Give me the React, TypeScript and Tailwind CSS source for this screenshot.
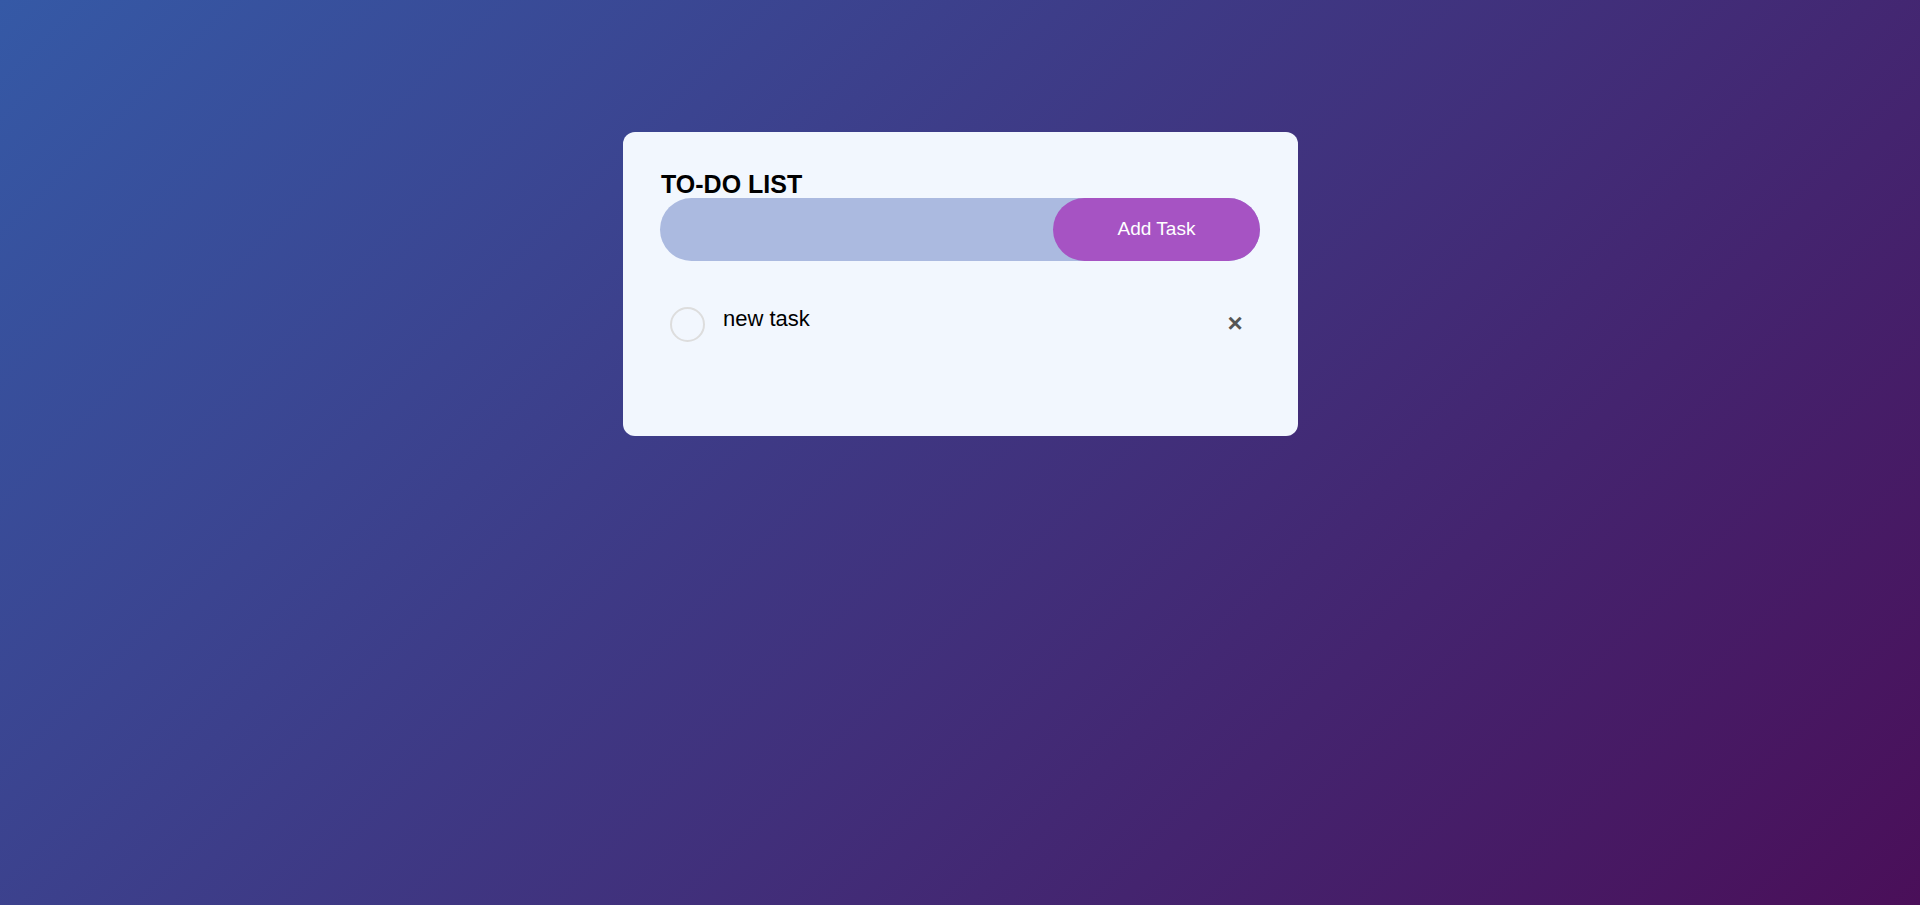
import React, { useState } from 'react';

type Task = { id: number; text: string; done: boolean };

function App() {
  const [tasks, setTasks] = useState<Task[]>([{ id: 1, text: 'new task', done: false }]);
  const [value, setValue] = useState('');

  const addTask = () => {
    if (!value.trim()) return;
    setTasks([...tasks, { id: Date.now(), text: value, done: false }]);
    setValue('');
  };

  return (
    <div
      className="min-h-screen w-full bg-[linear-gradient(135deg,#3559a6,#4a0f59)] pt-[132px]"
      style={{ fontFamily: '"Liberation Sans", Arial, sans-serif' }}
    >
      <div className="mx-auto w-[675px] rounded-[12px] bg-[#f2f7fe] px-[37.5px] pt-[37.5px] pb-[89px]">
        <h2 className="pl-[1px] text-[25px] font-bold leading-[28.5px] text-black">TO-DO LIST</h2>

        {/* input row */}
        <div className="mb-[31px] flex h-[63px] items-center rounded-full bg-[#abbae0]">
          <input
            className="h-full flex-1 bg-transparent px-[25px] text-[18px] outline-none"
            value={value}
            onChange={(e) => setValue(e.target.value)}
          />
          <button
            onClick={addTask}
            className="h-full w-[207px] rounded-full bg-[#a653c3] text-[19px] text-white"
          >
            Add Task
          </button>
        </div>

        {/* tasks */}
        <ul>
          {tasks.map((t) => (
            <li key={t.id} className="relative py-[15px] pr-[60px] pl-[63px] text-[22px] leading-[24.5px] text-black">
              <button
                onClick={() => setTasks(tasks.map((x) => (x.id === t.id ? { ...x, done: !x.done } : x)))}
                className={`absolute top-[15px] left-[10px] h-[35px] w-[35px] rounded-full border-[2.5px] ${t.done ? 'border-[#a653c3] bg-[#a653c3]' : 'border-[#dddddd]'}`}
              />
              <span className={t.done ? 'text-[#555] line-through' : ''}>{t.text}</span>
              <button
                onClick={() => setTasks(tasks.filter((x) => x.id !== t.id))}
                className="absolute top-[6px] right-0 h-[50px] w-[50px] rounded-full text-center text-[26px] font-bold leading-[50px] text-[#555]"
              >
                ×
              </button>
            </li>
          ))}
        </ul>
      </div>
    </div>
  );
}

export default App;
